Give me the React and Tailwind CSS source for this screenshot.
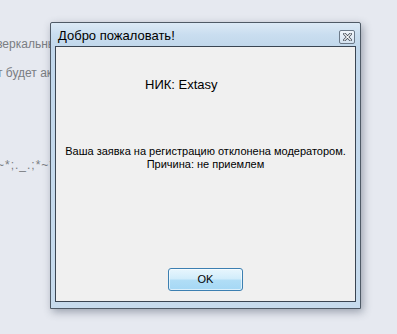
export default function App() {
  return (
    <div className="relative w-[397px] h-[334px] overflow-hidden bg-[#e6e9f0] font-['Liberation_Sans',Arial,sans-serif]">
      {/* page behind the dialog, only its left strip shows */}
      <div className="w-[50px] overflow-hidden">
        <div className="w-[200px] pt-[37px] text-[12px] text-[#7a7d82] leading-[14px] -ml-[3px] whitespace-nowrap">
          <p>зеркальные</p>
          <p className="mt-[15px]">т будет акт</p>
          <p className="mt-[78px] tracking-[1px]">~*;._.;*~*;</p>
        </div>
      </div>

      {/* dialog window */}
      <div className="absolute left-[50px] top-[22px] w-[311px] h-[287px] border border-[#4f5a66] rounded-t-[2px] bg-[linear-gradient(180deg,#dceaf6_0px,#c9ddef_12px,#c1d7eb_24px,#c7dbed_100%)] shadow-[2px_3px_8px_rgba(60,70,90,0.45)] flex flex-col">
        <div className="h-[23px] flex items-center justify-between pl-[7px] pr-[5px]">
          <span className="text-[13px] text-black leading-none pt-[1px]">Добро пожаловать!</span>
          <div className="w-[16px] h-[14px] mt-[4px] border border-[#6c7a89] rounded-[2px] bg-[linear-gradient(180deg,#f1f6fb,#d3e2f0)] flex items-center justify-center">
            <svg width="9" height="8" viewBox="0 0 9 8">
              <path d="M1.5 1 L7.5 7 M7.5 1 L1.5 7" stroke="#3d4550" strokeWidth="2.6" strokeLinecap="square" />
              <path d="M1.5 1 L7.5 7 M7.5 1 L1.5 7" stroke="#ffffff" strokeWidth="1.1" strokeLinecap="square" />
            </svg>
          </div>
        </div>

        <div className="flex-1 mx-[4px] mb-[6px] border border-[#3a4552] bg-[#f0f0f0] flex flex-col items-center">
          <p className="self-start ml-[89px] mt-[30px] text-[13px] leading-[16px] text-black">НИК: Extasy</p>
          <div className="mt-[52px] text-[11px] leading-[13px] text-black text-center">
            <p>Ваша заявка на регистрацию отклонена модератором.</p>
            <p>Причина: не приемлем</p>
          </div>
          <button className="mt-auto mb-[10px] w-[75px] h-[23px] border border-[#3c7fb1] rounded-[3px] bg-[linear-gradient(180deg,#e8f6fd_0%,#d2edfb_45%,#b0ddf6_55%,#a5d8f5_100%)] shadow-[inset_0_0_0_1px_rgba(255,255,255,0.6)] text-[11px] text-black leading-none">
            OK
          </button>
        </div>
      </div>
    </div>
  );
}
